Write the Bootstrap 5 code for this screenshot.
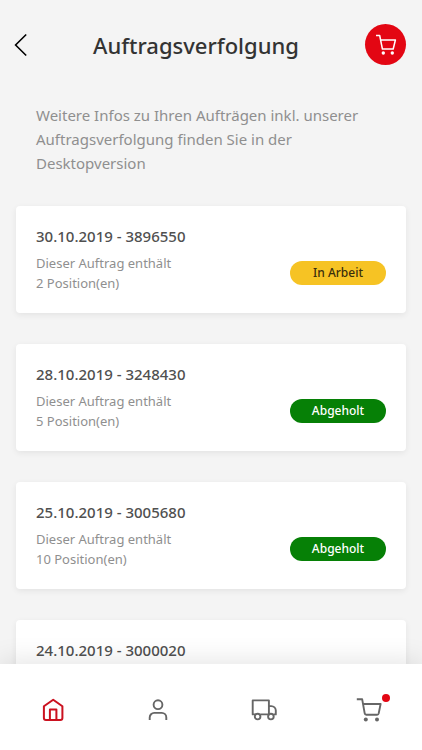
<!DOCTYPE html>
<html lang="de">
<head>
<meta charset="utf-8">
<meta name="viewport" content="width=device-width, initial-scale=1">
<title>Auftragsverfolgung</title>
<link href="https://cdn.jsdelivr.net/npm/bootstrap@5.3.0/dist/css/bootstrap.min.css" rel="stylesheet">
<style>
body { font-family: "Noto Sans", "Open Sans", sans-serif; background: #f4f4f4; color: #333; }
.topbar { padding: 24px 16px 0 13px; gap: 40px; }
.page-title { font-size: 22px; line-height: 40px; font-weight: 500; }
.back-link { width: 40px; height: 40px; color: #000; }
.cart-btn { width: 41px; height: 41px; background: #e30613; color: #fff; }
.cart-btn:hover { background: #c00510; color: #fff; }
.intro { font-size: 15px; line-height: 24px; color: #8f8f8f; padding: 38px 36px 0; margin-bottom: 31px; }
.orders { gap: 31px; padding: 0 16px 31px; }
.order { border: 0; border-radius: 4px; box-shadow: 0 2px 6px rgba(0, 0, 0, .07); padding: 20px 20px 20px; }
.order-title { font-size: 15px; line-height: 20px; font-weight: 500; color: #505050; margin-bottom: 7px; }
.order-text { font-size: 13px; line-height: 20px; color: #8f8f8f; }
.status { width: 96px; height: 24px; font-size: 12px; line-height: 24px; font-weight: 500; }
.status-open { background: #f6c324; color: #3a2e0c; }
.status-done { background: #068006; color: #fff; }
.tabs { height: 86px; background: #fff; box-shadow: 0 -4px 24px rgba(0, 0, 0, .1); padding-top: 6px; }
.tabs a { color: #666; }
.tabs a.active { color: #cb1220; }
.dot { width: 8px; height: 8px; background: #e30613; top: -4px; right: -8px; }
</style>
<script src="https://cdn.jsdelivr.net/npm/bootstrap@5.3.0/dist/js/bootstrap.bundle.min.js"></script>
</head>
<body class="vh-100 d-flex flex-column overflow-hidden">
<header class="topbar d-flex align-items-center flex-shrink-0">
  <a class="back-link d-flex align-items-center" href="#" aria-label="Zurück">
    <svg width="16" height="24" viewBox="0 0 16 24" fill="none" stroke="currentColor" stroke-width="1.6"><path d="M13.2 1.5 2.6 12l10.600 10.500"/></svg>
  </a>
  <h1 class="page-title m-0">Auftragsverfolgung</h1>
  <button type="button" class="cart-btn btn rounded-circle border-0 p-0 ms-auto d-flex align-items-center justify-content-center" aria-label="Warenkorb">
    <svg width="22" height="22" viewBox="0 0 22 22" fill="none" stroke="currentColor" stroke-width="1.5" stroke-linejoin="round"><path d="M1 1.500h3.700L7.400 15h10.800L20.400 6H5.700"/><circle cx="8.300" cy="19" r="1.700" fill="currentColor" stroke="none"/><circle cx="17.300" cy="19" r="1.700" fill="currentColor" stroke="none"/></svg>
  </button>
</header>
<main class="flex-grow-1 overflow-hidden">
  <p class="intro">Weitere Infos zu Ihren Aufträgen inkl. unserer Auftragsverfolgung finden Sie in der Desktopversion</p>
  <section class="orders d-flex flex-column">
    <article class="order card">
      <h2 class="order-title">30.10.2019 - 3896550</h2>
      <div class="d-flex justify-content-between align-items-center">
        <p class="order-text m-0">Dieser Auftrag enthält<br>2 Position(en)</p>
        <span class="status status-open rounded-pill text-center">In Arbeit</span>
      </div>
    </article>
    <article class="order card">
      <h2 class="order-title">28.10.2019 - 3248430</h2>
      <div class="d-flex justify-content-between align-items-center">
        <p class="order-text m-0">Dieser Auftrag enthält<br>5 Position(en)</p>
        <span class="status status-done rounded-pill text-center">Abgeholt</span>
      </div>
    </article>
    <article class="order card">
      <h2 class="order-title">25.10.2019 - 3005680</h2>
      <div class="d-flex justify-content-between align-items-center">
        <p class="order-text m-0">Dieser Auftrag enthält<br>10 Position(en)</p>
        <span class="status status-done rounded-pill text-center">Abgeholt</span>
      </div>
    </article>
    <article class="order card">
      <h2 class="order-title">24.10.2019 - 3000020</h2>
    </article>
  </section>
</main>
<nav class="tabs d-flex align-items-center flex-shrink-0 position-relative" aria-label="Hauptnavigation">
  <a class="active flex-fill w-25 d-flex justify-content-center" href="#" aria-label="Start" aria-current="page">
    <svg width="24" height="24" viewBox="0 0 24 24" fill="none" stroke="currentColor" stroke-width="2" stroke-linejoin="round"><path d="M2.900 8.200 12.200 1.700l9.200 6.500v11.800a2 2 0 0 1-2 2H4.900a2 2 0 0 1-2-2z"/><path d="M8.900 22V11.500h6.500V22"/></svg>
  </a>
  <a class="flex-fill w-25 d-flex justify-content-center" href="#" aria-label="Konto">
    <svg width="24" height="24" viewBox="0 0 24 24" fill="none" stroke="currentColor" stroke-width="1.900"><circle cx="12" cy="6.700" r="4.400"/><path d="M3.700 22v-2.600a4.500 4.500 0 0 1 4.500-4.500h7.600a4.500 4.500 0 0 1 4.500 4.500V22"/></svg>
  </a>
  <a class="flex-fill w-25 d-flex justify-content-center" href="#" aria-label="Lieferung">
    <svg width="26" height="24" viewBox="0 0 26 24" fill="none" stroke="currentColor" stroke-width="1.900" stroke-linejoin="round"><path d="M4 16.400H1.700V2.400h16.200v14H9.300M17.900 8.100h2.400a4.600 4.600 0 0 1 4.500 4.500v3.800h-2.200M15.500 16.400h2.400"/><circle cx="6.600" cy="18.600" r="2.800"/><circle cx="19.900" cy="18.600" r="2.800"/></svg>
  </a>
  <a class="flex-fill w-25 d-flex justify-content-center" href="#" aria-label="Warenkorb, neue Artikel">
    <span class="position-relative d-flex">
      <svg width="26" height="24" viewBox="0 0 26 24" fill="none" stroke="currentColor" stroke-width="1.900" stroke-linejoin="round"><path d="M.8 1.300h5.400L8.700 15.400q.2 1.300 1.500 1.300h11q1.200 0 1.500-1.300L24.600 6H7"/><circle cx="9.800" cy="21.500" r="2" fill="currentColor" stroke="none"/><circle cx="21" cy="21.500" r="2" fill="currentColor" stroke="none"/></svg>
      <span class="dot position-absolute rounded-circle"></span>
    </span>
  </a>
</nav>
</body>
</html>
